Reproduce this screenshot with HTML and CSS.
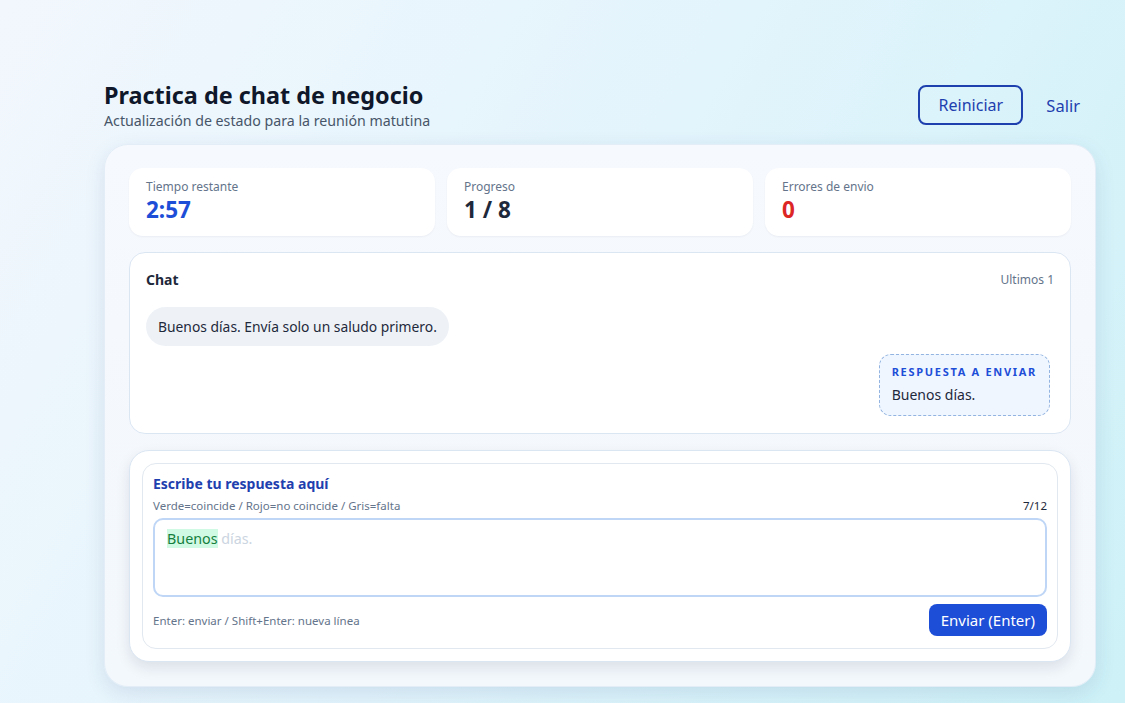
FILE: index.html
```html
<!DOCTYPE html>
<html lang="es">
<head>
    <meta charset="UTF-8">
    <meta name="viewport" content="width=device-width, initial-scale=1.0">
    <title>Practica de chat de negocio</title>
    <link rel="stylesheet" href="styles.css">
</head>
<body>

<div class="page">
    <div class="page-header">
        <div class="titles">
            <h1>Practica de chat de negocio</h1>
            <div class="subtitle">Actualización de estado para la reunión matutina</div>
        </div>
        <div class="header-actions">
            <button class="btn-outline">Reiniciar</button>
            <button class="btn-link">Salir</button>
        </div>
    </div>

    <div class="panel">
        <div class="stats">
            <div class="stat">
                <div class="stat-label">Tiempo restante</div>
                <div class="stat-value blue">2:57</div>
            </div>
            <div class="stat">
                <div class="stat-label">Progreso</div>
                <div class="stat-value">1 / 8</div>
            </div>
            <div class="stat">
                <div class="stat-label">Errores de envio</div>
                <div class="stat-value red">0</div>
            </div>
        </div>

        <div class="chat">
            <div class="chat-head">
                <span class="chat-title">Chat</span>
                <span class="chat-count">Ultimos 1</span>
            </div>
            <div class="bubble">Buenos días. Envía solo un saludo primero.</div>
            <div class="answer-row">
                <div class="answer">
                    <div class="answer-label">RESPUESTA A ENVIAR</div>
                    <div class="answer-text">Buenos días.</div>
                </div>
            </div>
        </div>

        <div class="composer">
            <div class="composer-inner">
                <div class="composer-title">Escribe tu respuesta aquí</div>
                <div class="legend-row">
                    <span>Verde=coincide / Rojo=no coincide / Gris=falta</span>
                    <span class="count">7/12</span>
                </div>
                <div class="input-box">
                    <span class="ok">Buenos</span><span class="missing"> días.</span>
                </div>
                <div class="composer-foot">
                    <span>Enter: enviar / Shift+Enter: nueva línea</span>
                    <button class="btn-send">Enviar (Enter)</button>
                </div>
            </div>
        </div>
    </div>
</div>

</body>
</html>
```

FILE: styles.css
```css
* {
    box-sizing: border-box;
}

body {
    margin: 0;
    min-height: 100vh;
    font-family: "Noto Sans", Roboto, sans-serif;
    color: #0f172a;
    background: linear-gradient(120deg, #f2f7fd 0%, #e2f4fc 50%, #cdf1f7 100%);
}

.page {
    width: 992px;
    margin-left: 104px;
    padding-top: 79px;
}

.page-header {
    display: flex;
    justify-content: space-between;
    align-items: flex-start;
    margin-bottom: 14px;
}

h1 {
    margin: 0;
    font-size: 23.4px;
    line-height: 32px;
    font-weight: bold;
    color: #0f172a;
}

.subtitle {
    font-size: 14.2px;
    line-height: 19px;
    color: #475569;
}

.header-actions {
    display: flex;
    align-items: center;
    gap: 8px;
    margin-top: 6px;
}

.btn-outline {
    font-family: inherit;
    font-size: 16px;
    color: #1e40af;
    background: transparent;
    border: 2px solid #1e40af;
    border-radius: 8px;
    height: 40px;
    width: 105px;
    cursor: pointer;
}

.btn-link {
    font-family: inherit;
    font-size: 16.5px;
    color: #1e40af;
    background: none;
    border: none;
    height: 40px;
    padding: 0 16px 0 15px;
    cursor: pointer;
}

.panel {
    background: linear-gradient(180deg, #f6f9fe, #f3f8fd);
    border: 1px solid #e3edf7;
    border-radius: 24px;
    padding: 23px 24px 24px;
    box-shadow: 0 6px 20px rgba(30, 64, 120, 0.12);
}

.stats {
    display: grid;
    grid-template-columns: repeat(3, 1fr);
    gap: 12px;
    margin-bottom: 16px;
}

.stat {
    background: #fff;
    border-radius: 14px;
    height: 68px;
    padding: 10px 17px;
    box-shadow: 0 1px 2px rgba(15, 23, 42, 0.05);
}

.stat-label {
    font-size: 12px;
    line-height: 18px;
    color: #64748b;
}

.stat-value {
    font-size: 22.5px;
    line-height: 28px;
    font-weight: bold;
    color: #1e293b;
}

.stat-value.blue {
    color: #1d4ed8;
}

.stat-value.red {
    color: #dc2626;
}

.chat {
    background: #fff;
    border: 1px solid #dbe6f3;
    border-radius: 16px;
    padding: 17px 16px 17px;
    margin-bottom: 16px;
}

.chat-head {
    display: flex;
    justify-content: space-between;
    align-items: center;
    height: 18px;
    margin-bottom: 19px;
}

.chat-title {
    font-size: 14px;
    font-weight: bold;
    color: #1e293b;
}

.chat-count {
    font-size: 12px;
    color: #64748b;
}

.bubble {
    display: inline-block;
    background: #eef2f7;
    border-radius: 20px;
    padding: 0 12px;
    height: 39px;
    line-height: 39px;
    font-size: 13.85px;
    color: #1e293b;
}

.answer-row {
    display: flex;
    justify-content: flex-end;
    margin-top: 8px;
    padding-right: 4px;
}

.answer {
    background: #eff6ff;
    border: 1px dashed #93b4e0;
    border-radius: 12px;
    padding: 9px 12px 8px;
}

.answer-label {
    font-size: 11px;
    font-weight: bold;
    letter-spacing: 1.7px;
    color: #1d4ed8;
    line-height: 16px;
    white-space: nowrap;
}

.answer-text {
    font-size: 14px;
    line-height: 24px;
    margin-top: 3px;
    color: #1e293b;
}

.composer {
    background: #fff;
    border: 1px solid #dbe6f3;
    border-radius: 20px;
    padding: 12px;
    box-shadow: 0 6px 14px rgba(15, 23, 42, 0.1);
}

.composer-inner {
    border: 1px solid #e2e8f0;
    border-radius: 14px;
    padding: 9px 10px 12px;
}

.composer-title {
    font-size: 14px;
    line-height: 22px;
    font-weight: bold;
    color: #1e40af;
}

.legend-row {
    display: flex;
    justify-content: space-between;
    font-size: 11.5px;
    line-height: 16px;
    color: #64748b;
    margin-top: 3px;
    margin-bottom: 4px;
}

.legend-row .count {
    color: #1e293b;
}

.input-box {
    height: 79px;
    border: 2px solid #bfd6f6;
    border-radius: 10px;
    padding: 8px 12px;
    font-size: 14.3px;
    line-height: 22px;
}

.ok {
    background: #d1fae5;
    color: #15803d;
}

.missing {
    color: #cbd5e1;
}

.composer-foot {
    display: flex;
    justify-content: space-between;
    align-items: center;
    margin-top: 7px;
    font-size: 11.5px;
    color: #64748b;
}

.btn-send {
    font-family: inherit;
    font-size: 15px;
    color: #fff;
    background: #1d4ed8;
    border: none;
    border-radius: 8px;
    height: 32px;
    padding: 0 12px;
    cursor: pointer;
}
```
